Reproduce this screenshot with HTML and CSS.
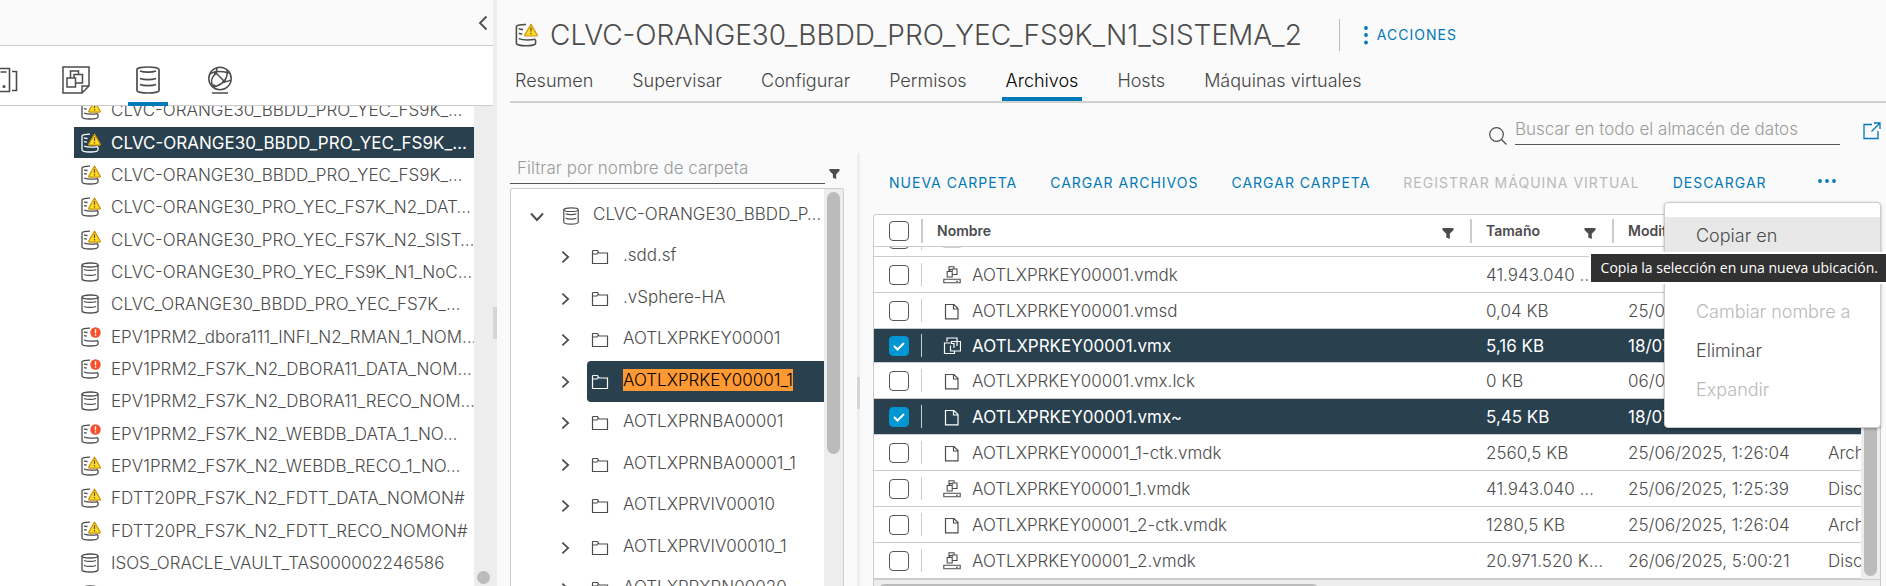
FILE: index.html
```html
<!DOCTYPE html>
<html lang="es">
<head>
<meta charset="utf-8">
<title>CLVC-ORANGE30_BBDD_PRO_YEC_FS9K_N1_SISTEMA_2 - Archivos</title>
<link rel="stylesheet" href="styles.css">
</head>
<body>
<svg class="defs" aria-hidden="true">
  <symbol id="db" viewBox="0 0 18 20"><g fill="none" stroke="currentColor" stroke-width="1.3"><ellipse cx="9" cy="3" rx="8" ry="2"/><path d="M1 3v14c0 1 3.500 2 8 2s8-1 8-2V3M3 7.500c3 1.200 9 1.200 12 0M3 12.500c3 1.200 9 1.200 12 0"/></g></symbol>
  <symbol id="db-cut" viewBox="0 0 18 20"><g fill="none" stroke="currentColor" stroke-width="1.3"><path d="M9 1.200C4.500 1.100 1 1.900 1 3v13.800C1 18 4.500 19 9 19s8-1 8-2.200V14M3 4.800c1 .4 2 .6 3.500.7M3 8.500c1 .4 1.800.5 2.800.6M3 13c3 1.300 9 1.300 14 .6"/></g></symbol>
  <symbol id="warn" viewBox="0 0 14 14"><path d="M7 1.200 13.200 12a.7.7 0 0 1-.6 1H1.400a.7.7 0 0 1-.6-1z" fill="#fddb27" stroke="#c9920e" stroke-width="1.200" stroke-linejoin="round"/><path d="M7 4.500v4M7 9.800v1.400" stroke="#6b5300" stroke-width="1.300"/></symbol>
  <symbol id="err" viewBox="0 0 12 12"><circle cx="6" cy="6" r="5.700" fill="#f54f2b"/><path d="M6 2.500v4.200M6 8v1.600" stroke="#fff" stroke-width="1.500"/></symbol>
  <symbol id="folder" viewBox="0 0 18 16"><path d="M1.500 14.500v-12q0-1 1-1h4l1.500 2.500h8.500v10.500zM1.500 5H6l1-1.500" fill="none" stroke="currentColor" stroke-width="1.200"/></symbol>
  <symbol id="file" viewBox="0 0 18 18"><path d="M2.500 2.500h8.500l4 4v10.300H2.500zM10.500 2.500v4.500H15" fill="none" stroke="currentColor" stroke-width="1.200"/></symbol>
  <symbol id="disk" viewBox="0 0 18 18"><g fill="none" stroke="currentColor" stroke-width="1.100"><path d="M.8 13.200h16.400v3.600H.8zM13 15.200h2M4.200 5.500h5v5.500h-5zM6 5.500V.8h5V3M9.200 3h4.800v5.500H9.200zM6.800 5.500V3.500h2.400"/></g></symbol>
  <symbol id="vm" viewBox="0 0 18 18"><g fill="none" stroke="currentColor" stroke-width="1.200"><path d="M4 4.500V1h10v3M7.500 6H1.500v10.500h10V14M7.500 8.500V14h10V4.500H8.500V6.500H11V11M14 4.500v4.500"/></g></symbol>
  <symbol id="funnel" viewBox="0 0 12 12"><path d="M.5 0h11v2L7.800 5.800V11L4.300 9.500V5.800L.5 2z" fill="currentColor"/></symbol>
  <symbol id="right" viewBox="0 0 10 14"><path d="m1.500 1 6.500 6-6.500 6" fill="none" stroke="currentColor" stroke-width="1.900"/></symbol>
  <symbol id="down" viewBox="0 0 14 10"><path d="m1 1.500 6 6.500 6-6.500" fill="none" stroke="currentColor" stroke-width="1.900"/></symbol>
</svg>

<div class="app">
  <aside class="nav">
    <div class="nav-top">
      <button class="icon-btn" type="button" aria-label="Contraer"><svg width="10" height="16" viewBox="0 0 10 16"><path d="M8.500 1.500 2 8l6.500 6.500" fill="none" stroke="currentColor" stroke-width="1.800"/></svg></button>
    </div>
    <div class="nav-tabs">
      <button type="button" class="nav-tab" aria-label="Hosts y clústeres"><svg width="28" height="28" viewBox="0 0 28 28"><g fill="none" stroke="currentColor" stroke-width="1.600"><path d="M1 5h6M1 2.500h18.500v23H1M22 5.500h4.500v19H22M10.500 6h6"/></g><circle cx="14" cy="20.500" r="1.500" fill="currentColor"/></svg></button>
      <button type="button" class="nav-tab" aria-label="Máquinas virtuales y plantillas"><svg width="28" height="28" viewBox="0 0 28 28"><g fill="none" stroke="currentColor" stroke-width="1.500"><path d="M1 1h26v19l-7 7H1zM27 20h-7v7M5 12h8.500v9H5zM8.500 12V5h8v3.500M12 12V8.500h8.500V17h-7"/></g></svg></button>
      <button type="button" class="nav-tab active" aria-label="Almacenamiento"><svg width="26" height="28" viewBox="0 0 26 28"><g fill="none" stroke="currentColor" stroke-width="1.700"><path d="M2 3.500C2 2 7 1 13 1s11 1 11 2.500v21C24 26 19 27 13 27S2 26 2 24.500zM5 5c4 1.500 12 1.500 16 0M5 12.500c4 1.500 12 1.500 16 0M5 18.500c4 1.500 12 1.500 16 0"/></g></svg></button>
      <button type="button" class="nav-tab" aria-label="Redes"><svg width="26" height="28" viewBox="0 0 26 28"><g fill="none" stroke="currentColor" stroke-width="1.500"><circle cx="13" cy="12.500" r="11.200"/><path d="M5 27h16M3 8c4-3 11-3 19-1M9 7l8 8M7 21C17 18 21 12 20 4M9 7C5 11 3 15 5.500 19.500M17 15c3 1 5 0 6.500-1M9 7l1-5"/></g><g fill="currentColor"><circle cx="8.500" cy="7" r="1.700"/><circle cx="17" cy="15.500" r="1.700"/><circle cx="7" cy="20" r="1.700"/></g></svg></button>
    </div>
    <div class="nav-body">
      <ul class="inv">
        <li><span class="ico"><svg><use href="#db-cut"/></svg><svg class="badge"><use href="#warn"/></svg></span>CLVC-ORANGE30_BBDD_PRO_YEC_FS9K_…</li>
        <li class="selected"><span class="ico"><svg><use href="#db-cut"/></svg><svg class="badge"><use href="#warn"/></svg></span>CLVC-ORANGE30_BBDD_PRO_YEC_FS9K_…</li>
        <li><span class="ico"><svg><use href="#db-cut"/></svg><svg class="badge"><use href="#warn"/></svg></span>CLVC-ORANGE30_BBDD_PRO_YEC_FS9K_…</li>
        <li><span class="ico"><svg><use href="#db-cut"/></svg><svg class="badge"><use href="#warn"/></svg></span>CLVC-ORANGE30_PRO_YEC_FS7K_N2_DAT…</li>
        <li><span class="ico"><svg><use href="#db-cut"/></svg><svg class="badge"><use href="#warn"/></svg></span>CLVC-ORANGE30_PRO_YEC_FS7K_N2_SIST…</li>
        <li><span class="ico"><svg><use href="#db"/></svg></span>CLVC-ORANGE30_PRO_YEC_FS9K_N1_NoC…</li>
        <li><span class="ico"><svg><use href="#db"/></svg></span>CLVC_ORANGE30_BBDD_PRO_YEC_FS7K_…</li>
        <li><span class="ico"><svg><use href="#db-cut"/></svg><svg class="badge err"><use href="#err"/></svg></span>EPV1PRM2_dbora111_INFI_N2_RMAN_1_NOM…</li>
        <li><span class="ico"><svg><use href="#db-cut"/></svg><svg class="badge err"><use href="#err"/></svg></span>EPV1PRM2_FS7K_N2_DBORA11_DATA_NOM…</li>
        <li><span class="ico"><svg><use href="#db"/></svg></span>EPV1PRM2_FS7K_N2_DBORA11_RECO_NOM…</li>
        <li><span class="ico"><svg><use href="#db-cut"/></svg><svg class="badge err"><use href="#err"/></svg></span>EPV1PRM2_FS7K_N2_WEBDB_DATA_1_NO…</li>
        <li><span class="ico"><svg><use href="#db-cut"/></svg><svg class="badge"><use href="#warn"/></svg></span>EPV1PRM2_FS7K_N2_WEBDB_RECO_1_NO…</li>
        <li><span class="ico"><svg><use href="#db-cut"/></svg><svg class="badge"><use href="#warn"/></svg></span>FDTT20PR_FS7K_N2_FDTT_DATA_NOMON#</li>
        <li><span class="ico"><svg><use href="#db-cut"/></svg><svg class="badge"><use href="#warn"/></svg></span>FDTT20PR_FS7K_N2_FDTT_RECO_NOMON#</li>
        <li><span class="ico"><svg><use href="#db"/></svg></span>ISOS_ORACLE_VAULT_TAS000002246586</li>
        <li><span class="ico"><svg><use href="#db"/></svg></span></li>
      </ul>
      <div class="nav-scroll"><span class="dot"></span></div>
    </div>
  </aside>
  <div class="splitter"><span class="grip"></span></div>

  <main class="content">
    <header class="head">
      <span class="ico big"><svg><use href="#db-cut"/></svg><svg class="badge"><use href="#warn"/></svg></span>
      <h1>CLVC-ORANGE30_BBDD_PRO_YEC_FS9K_N1_SISTEMA_2</h1>
      <span class="divider"></span>
      <button type="button" class="btn actions"><svg width="4" height="20" viewBox="0 0 4 20" fill="currentColor"><circle cx="2" cy="3" r="1.900"/><circle cx="2" cy="10" r="1.900"/><circle cx="2" cy="17.500" r="1.900"/></svg>ACCIONES</button>
    </header>
    <nav class="tabs">
      <a href="#">Resumen</a><a href="#">Supervisar</a><a href="#">Configurar</a><a href="#">Permisos</a><a href="#" class="active">Archivos</a><a href="#">Hosts</a><a href="#">Máquinas virtuales</a>
    </nav>

    <div class="search">
      <svg width="18" height="18" viewBox="0 0 18 18"><g fill="none" stroke="currentColor" stroke-width="1.200"><circle cx="7.500" cy="7.500" r="6.800"/><path d="m12.500 12.500 5 5"/></g></svg>
      <input type="text" aria-label="Buscar" placeholder="Buscar en todo el almacén de datos">
      <a href="#" class="popout" aria-label="Abrir en ventana nueva"><svg width="18" height="18" viewBox="0 0 18 18"><path d="M9 2.500H1v14h14V9M11 1h6v6M17 1l-8.500 8.500" fill="none" stroke="currentColor" stroke-width="1.300"/></svg></a>
    </div>

    <div class="panes">
      <section class="folders">
        <div class="filter">
          <input type="text" aria-label="Filtrar" placeholder="Filtrar por nombre de carpeta">
          <svg width="11" height="11"><use href="#funnel"/></svg>
        </div>
        <div class="tree-box">
          <ul class="tree">
            <li class="root"><svg class="down"><use href="#down"/></svg><span class="node"><svg class="dbi"><use href="#db"/></svg><span>CLVC-ORANGE30_BBDD_P…</span></span></li>
            <li><svg class="right"><use href="#right"/></svg><span class="node"><svg><use href="#folder"/></svg><span>.sdd.sf</span></span></li>
            <li><svg class="right"><use href="#right"/></svg><span class="node"><svg><use href="#folder"/></svg><span>.vSphere-HA</span></span></li>
            <li><svg class="right"><use href="#right"/></svg><span class="node"><svg><use href="#folder"/></svg><span>AOTLXPRKEY00001</span></span></li>
            <li><svg class="right"><use href="#right"/></svg><span class="node selected"><svg><use href="#folder"/></svg><mark>AOTLXPRKEY00001_1</mark></span></li>
            <li><svg class="right"><use href="#right"/></svg><span class="node"><svg><use href="#folder"/></svg><span>AOTLXPRNBA00001</span></span></li>
            <li><svg class="right"><use href="#right"/></svg><span class="node"><svg><use href="#folder"/></svg><span>AOTLXPRNBA00001_1</span></span></li>
            <li><svg class="right"><use href="#right"/></svg><span class="node"><svg><use href="#folder"/></svg><span>AOTLXPRVIV00010</span></span></li>
            <li><svg class="right"><use href="#right"/></svg><span class="node"><svg><use href="#folder"/></svg><span>AOTLXPRVIV00010_1</span></span></li>
            <li><svg class="right"><use href="#right"/></svg><span class="node"><svg><use href="#folder"/></svg><span>AOTLXPRXPN00020</span></span></li>
          </ul>
          <div class="vbar"><span class="thumb tree-thumb"></span></div>
        </div>
      </section>
      <div class="splitter inner"><span class="grip"></span></div>

      <section class="files">
        <div class="toolbar">
          <button type="button" class="btn">NUEVA CARPETA</button>
          <button type="button" class="btn">CARGAR ARCHIVOS</button>
          <button type="button" class="btn">CARGAR CARPETA</button>
          <button type="button" class="btn" disabled>REGISTRAR MÁQUINA VIRTUAL</button>
          <button type="button" class="btn">DESCARGAR</button>
          <button type="button" class="btn more" aria-label="Más acciones"><svg width="18" height="4" viewBox="0 0 18 4" fill="currentColor"><circle cx="2" cy="2" r="1.900"/><circle cx="9" cy="2" r="1.900"/><circle cx="16" cy="2" r="1.900"/></svg></button>
          <div class="menu" role="menu">
            <button type="button" class="hover" role="menuitem">Copiar en</button>
            <button type="button" class="after-gap" role="menuitem" disabled>Cambiar nombre a</button>
            <button type="button" role="menuitem">Eliminar</button>
            <button type="button" role="menuitem" disabled>Expandir</button>
            <div class="tooltip" role="tooltip">Copia la selección en una nueva ubicación.</div>
          </div>
        </div>

        <div class="grid">
          <table class="grid-head">
            <colgroup><col class="c-check"><col><col class="c-size"><col class="c-date"><col class="c-type"></colgroup>
            <thead><tr>
              <th><input type="checkbox" aria-label="Seleccionar todo"></th>
              <th><span class="th">Nombre<svg width="12" height="12"><use href="#funnel"/></svg></span></th>
              <th><span class="th">Tamaño<svg width="12" height="12"><use href="#funnel"/></svg></span></th>
              <th><span class="th">Modificado</span></th>
              <th></th>
            </tr></thead>
          </table>
          <div class="grid-view">
            <div class="grid-rows">
              <table class="grid-body">
                <colgroup><col class="c-check"><col><col class="c-size"><col class="c-date"><col class="c-type"></colgroup>
                <tbody>
                  <tr><td><input type="checkbox" aria-label="Fila"></td><td><span class="name"><svg><use href="#disk"/></svg></span></td><td></td><td></td><td></td></tr>
                  <tr><td><input type="checkbox" aria-label="AOTLXPRKEY00001.vmdk"></td><td><span class="name"><svg><use href="#disk"/></svg>AOTLXPRKEY00001.vmdk</span></td><td>41.943.040 …</td><td></td><td></td></tr>
                  <tr><td><input type="checkbox" aria-label="AOTLXPRKEY00001.vmsd"></td><td><span class="name"><svg><use href="#file"/></svg>AOTLXPRKEY00001.vmsd</span></td><td>0,04 KB</td><td>25/06/2025</td><td></td></tr>
                  <tr class="selected short"><td><input type="checkbox" checked aria-label="AOTLXPRKEY00001.vmx"></td><td><span class="name"><svg><use href="#vm"/></svg>AOTLXPRKEY00001.vmx</span></td><td>5,16 KB</td><td>18/07/2025</td><td></td></tr>
                  <tr><td><input type="checkbox" aria-label="AOTLXPRKEY00001.vmx.lck"></td><td><span class="name"><svg><use href="#file"/></svg>AOTLXPRKEY00001.vmx.lck</span></td><td>0 KB</td><td>06/07/2025</td><td></td></tr>
                  <tr class="selected"><td><input type="checkbox" checked aria-label="AOTLXPRKEY00001.vmx~"></td><td><span class="name"><svg><use href="#file"/></svg>AOTLXPRKEY00001.vmx~</span></td><td>5,45 KB</td><td>18/07/2025</td><td></td></tr>
                  <tr><td><input type="checkbox" aria-label="AOTLXPRKEY00001_1-ctk.vmdk"></td><td><span class="name"><svg><use href="#file"/></svg>AOTLXPRKEY00001_1-ctk.vmdk</span></td><td>2560,5 KB</td><td>25/06/2025, 1:26:04</td><td>Archivo</td></tr>
                  <tr><td><input type="checkbox" aria-label="AOTLXPRKEY00001_1.vmdk"></td><td><span class="name"><svg><use href="#disk"/></svg>AOTLXPRKEY00001_1.vmdk</span></td><td>41.943.040 …</td><td>25/06/2025, 1:25:39</td><td>Disco</td></tr>
                  <tr><td><input type="checkbox" aria-label="AOTLXPRKEY00001_2-ctk.vmdk"></td><td><span class="name"><svg><use href="#file"/></svg>AOTLXPRKEY00001_2-ctk.vmdk</span></td><td>1280,5 KB</td><td>25/06/2025, 1:26:04</td><td>Archivo</td></tr>
                  <tr><td><input type="checkbox" aria-label="AOTLXPRKEY00001_2.vmdk"></td><td><span class="name"><svg><use href="#disk"/></svg>AOTLXPRKEY00001_2.vmdk</span></td><td>20.971.520 K…</td><td>26/06/2025, 5:00:21</td><td>Disco</td></tr>
                </tbody>
              </table>
            </div>
            <div class="vbar"><span class="thumb grid-thumb"></span></div>
          </div>
          <div class="hbar"><span class="thumb"></span></div>
        </div>
      </section>
    </div>
  </main>
</div>
</body>
</html>
```
FILE: styles.css
```css
* { box-sizing: border-box; }
html, body { height: 100%; }
body {
  margin: 0;
  overflow: hidden;
  font: 300 17px/24px Inter, "Open Sans", sans-serif;
  color: #4c4c4c;
  background: #fafafa;
}
ul { list-style: none; margin: 0; padding: 0; }
svg { display: block; flex: none; }
button { font: inherit; color: inherit; background: none; border: 0; padding: 0; }
input { font: inherit; color: inherit; }
.defs { position: absolute; width: 0; height: 0; }
.app { display: flex; height: 100vh; overflow: hidden; }

/* inventory panel */
.nav { flex: none; width: 493px; display: flex; flex-direction: column; background: #fff; }
.nav-top {
  flex: none; height: 46px; padding-right: 5px;
  display: flex; align-items: center; justify-content: flex-end;
  background: #fafafa; border-bottom: 1px solid #ccc;
}
.nav-tabs {
  flex: none; height: 60px; display: flex; gap: 32px;
  border-bottom: 1px solid #ccc;
}
.nav-tab {
  flex: none; width: 40px; height: 60px; padding-top: 8px;
  display: flex; align-items: center; justify-content: center;
}
.nav-tab:first-child { margin-left: -16px; }
.nav-tab.active { border-bottom: 4px solid #0079b8; padding-top: 12px; }
.nav-body { flex: 1; min-height: 0; display: flex; overflow: hidden; }
.inv { flex: 1; min-width: 0; margin-top: -12px; padding-left: 74px; }
.inv li {
  height: 32px; padding-left: 7px; border-bottom: 1px solid #fff;
  display: flex; align-items: center; gap: 10px; white-space: nowrap;
}
.inv li:nth-child(3n+1) { height: 33px; }
.selected { background: #29404e; color: #fff; font-weight: 400; }
.ico { position: relative; flex: none; width: 20px; height: 20px; }
.ico svg { width: 18px; height: 20px; }
.ico .badge { position: absolute; top: 0; right: 0; width: 13px; height: 13px; }
.ico .err { width: 11px; height: 11px; }
.nav-scroll {
  flex: none; width: 19px; padding-bottom: 2px; background: #ededed;
  display: flex; align-items: flex-end; justify-content: center;
}
.dot { width: 13px; height: 13px; border-radius: 50%; background: #bbb; }
.splitter {
  flex: none; width: 4px; padding-top: 60px; background: #eee;
  display: flex; flex-direction: column; justify-content: center;
}
.grip { height: 32px; background: #d5d5d5; }

/* object header */
.content { flex: 1; min-width: 0; padding-left: 13px; display: flex; flex-direction: column; }
.head { flex: none; height: 62px; padding: 8px 0 0 5px; display: flex; align-items: center; }
.ico.big { width: 24px; height: 24px; }
.ico.big svg { width: 22px; height: 24px; }
.ico.big .badge { width: 16px; height: 14px; }
h1 { margin: 0 37px 0 11px; font: 300 28px/36px Inter, sans-serif; white-space: nowrap; }
.divider { width: 1px; height: 32px; margin-right: 24px; background: #bbb; }
.btn { font: 400 14px/20px Inter, sans-serif; letter-spacing: 1px; color: #0079b8; white-space: nowrap; }
.btn:disabled { color: #b9b9b9; }
.actions { display: flex; align-items: center; gap: 9px; }
.tabs {
  flex: none; height: 41px; padding-left: 1px; display: flex; gap: 31px;
  border-bottom: 2px solid #d0d0d0; font-size: 18px;
}
.tabs a { padding: 7px 4px; color: #454545; text-decoration: none; white-space: nowrap; }
.tabs .active { color: #000; border-bottom: 4px solid #0079b8; }

.search { flex: none; height: 50px; display: flex; justify-content: flex-end; align-items: center; padding-right: 5px; }
.search svg { margin-top: 16px; }
.search input {
  width: 325px; height: 32px; margin: 2px 23px 0 8px; padding: 0;
  border: 0; border-bottom: 1px solid #565656; background: none;
}
input::placeholder { color: #9a9a9a; opacity: 1; }
.popout { color: #0079b8; }
.popout svg { margin-top: 6px; }

/* folder pane */
.panes { flex: 1; min-height: 0; display: flex; }
.folders { flex: none; width: 334px; display: flex; flex-direction: column; }
.filter { flex: none; height: 31px; display: flex; align-items: flex-end; gap: 4px; }
.filter input {
  flex: none; width: 315px; height: 31px; padding: 0 7px;
  border: 0; border-bottom: 1px solid #565656; background: none;
}
.filter svg { margin-bottom: 4px; }
.tree-box {
  flex: 1; min-height: 0; margin-top: 4px; display: flex; overflow: hidden;
  background: #fff; border: 1px solid #ccc; border-bottom: 0; border-radius: 3px 3px 0 0;
}
.tree { flex: 1; min-width: 0; padding-top: 6px; }
.tree li { height: 41px; padding-left: 50px; display: flex; align-items: center; gap: 17px; }
.tree li:nth-child(2n) { height: 42px; }
.tree .root { padding-left: 19px; gap: 14px; }
.tree .right { width: 9px; height: 14px; }
.tree .down { width: 14px; height: 10px; margin-top: 2px; }
.node { flex: 1; min-width: 0; align-self: stretch; padding-left: 4px; display: flex; align-items: center; gap: 14px; white-space: nowrap; border-radius: 4px 0 0 4px; }
.node > span, mark { margin-bottom: 4px; line-height: 22px; }
.node svg { width: 18px; height: 16px; }
.node .dbi { width: 18px; height: 18px; }
.root .node { gap: 13px; }
mark { background: #ff9933; color: #000; font-weight: 300; }
.vbar { flex: none; width: 19px; padding: 3px; background: #ededed; }
.thumb { display: block; border-radius: 7px; background: #bbb; }
.tree-thumb { height: 67%; }
.inner { width: 3px; margin-left: 13px; padding-top: 46px; }

/* file pane */
.files { flex: 1; min-width: 0; padding: 0 5px 0 13px; display: flex; flex-direction: column; }
.toolbar { position: relative; flex: none; height: 61px; padding: 0 0 1px 16px; display: flex; align-items: center; gap: 33px; }
.more { margin-left: 18px; height: 24px; padding-bottom: 4px; }
.menu {
  position: absolute; z-index: 2; top: 49px; right: 0; width: 217px; padding: 14px 0 17px;
  background: #fff; border: 1px solid #ccc; border-radius: 4px; box-shadow: 0 1px 3px rgba(0, 0, 0, .3);
}
.menu button { display: block; width: 100%; height: 39px; padding: 0 0 1px 31px; text-align: left; font-size: 18px; }
.menu .hover { background: #e8e8e8; }
.menu .after-gap { margin-top: 37px; }
.menu button:disabled { color: #b9b9b9; }
.tooltip {
  position: absolute; top: 51px; right: -6px; padding: 0 8px 0 10px;
  background: #313131; color: #fff; outline: 2px solid #fff;
  font: 400 14px/28px "Open Sans", sans-serif; white-space: nowrap;
}
.grid {
  flex: 1; min-height: 0; display: flex; flex-direction: column;
  background: #fff; border: 1px solid #ccc; border-bottom: 0; border-radius: 3px 3px 0 0; overflow: hidden;
}
table { width: 100%; table-layout: fixed; border-collapse: separate; border-spacing: 0; }
.c-check { width: 47px; }
.c-size { width: 142px; }
.c-date { width: 200px; }
.c-type { width: 49px; }
.grid-head { flex: none; padding-right: 19px; border-bottom: 1px solid #ccc; }
th { height: 31px; padding: 0; font-size: 14px; font-weight: 600; line-height: 20px; text-align: left; }
.th { height: 24px; padding: 0 16px 0 14px; display: flex; align-items: center; justify-content: space-between; border-left: 2px solid #ccc; }
.th svg { margin-top: 6px; }
.grid-view { flex: none; display: flex; overflow: hidden; border-bottom: 1px solid #ccc; }
.grid-rows { flex: 1; min-width: 0; overflow: hidden; }
.grid-body { margin-top: -26px; }
td { height: 36px; padding: 0 0 0 16px; line-height: 20px; white-space: nowrap; overflow: hidden; border-bottom: 1px solid #ccc; }
.short td { height: 34px; }
td:first-child, th:first-child { padding: 0 0 0 15px; }
td:nth-child(2) { padding: 0; }
.selected td { font-weight: 400; }
.name { height: 23px; padding-left: 21px; display: flex; align-items: center; gap: 11px; border-left: 1px solid #ccc; }
.name svg { width: 18px; height: 18px; }
input[type="checkbox"] {
  appearance: none; display: block; width: 20px; height: 20px; margin: 0;
  border: 1px solid #565656; border-radius: 4px; background: #fff;
}
input[type="checkbox"]:checked {
  border-color: #0095d3;
  background: #0095d3 url("data:image/svg+xml,%3Csvg xmlns='http://www.w3.org/2000/svg' viewBox='0 0 18 18'%3E%3Cpath d='M4 9l3.500 3.500L14 6' fill='none' stroke='%23fff' stroke-width='2'/%3E%3C/svg%3E") center / 18px no-repeat;
}
.grid-thumb { height: 100%; }
.hbar { flex: 1; min-height: 8px; padding: 4px 0 0 4px; background: #ededed; }
.hbar .thumb { width: 44%; height: 13px; }
```
